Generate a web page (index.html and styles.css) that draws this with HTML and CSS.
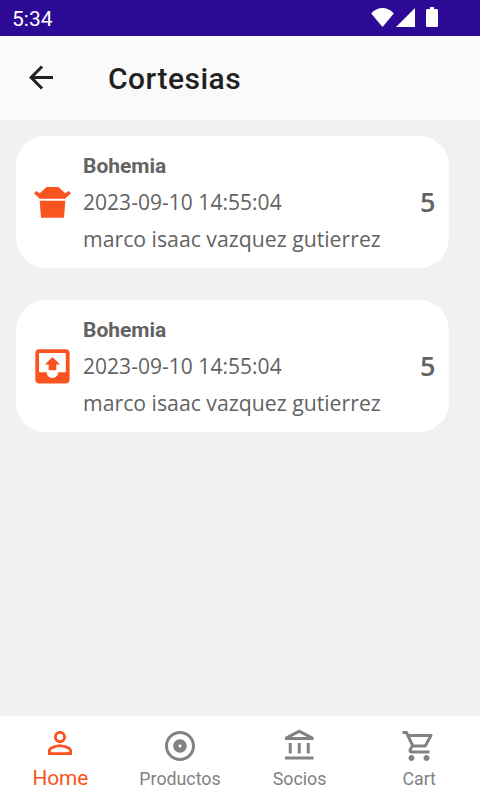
FILE: index.html
```
<!DOCTYPE html>
<html lang="es">
<head>
<meta charset="utf-8">
<title>Cortesias</title>
<link rel="stylesheet" href="styles.css">
</head>
<body>
<div class="status">
  <span class="time">5:34</span>
  <svg class="signals" width="72" height="24" viewBox="0 0 72 24" fill="#fff"><path d="M12.500 21L1.200 7.500Q6 2 12.500 2T23.800 7.500Z"/><path d="M26 21H45V2Z"/><path d="M57.500 3H60V1H64V3H66.500Q68 3 68 4.500V19.500Q68 21 66.500 21H57.500Q56 21 56 19.500V4.500Q56 3 57.500 3Z"/></svg>
</div>
<header class="bar">
  <svg class="back" width="36" height="36" viewBox="0 0.330 24 24" fill="#212121"><path d="M20 11H7.830l5.590-5.590L12 4l-8 8 8 8 1.410-1.410L7.830 13H20v-2z"/></svg>
  <h1>Cortesias</h1>
</header>
<main>
  <article class="card">
    <svg class="kind" viewBox="57 147 138 138"><path d="M72 190L79 183L89 190L110 171H145L166 190L176 183L183 190L165 206H89ZM89 212H166L162 263H93Z"/></svg>
    <div class="info"><strong>Bohemia</strong><span class="date">2023-09-10 14:55:04</span><span class="person">marco isaac vazquez gutierrez</span></div>
    <b class="count">5</b>
  </article>
  <article class="card">
    <svg class="kind" viewBox="-0.305 -0.305 24.130 24.130"><path d="M19 3H4.990c-1.110 0-1.980.9-1.980 2L3 19c0 1.100.88 2 1.990 2H19c1.100 0 2-.9 2-2V5c0-1.100-.9-2-2-2zm0 12h-4c0 1.660-1.350 3-3 3s-3-1.340-3-3H4.990V5H19v10zM8 11h2v3h4v-3h2l-4-4-4 4z"/></svg>
    <div class="info"><strong>Bohemia</strong><span class="date">2023-09-10 14:55:04</span><span class="person">marco isaac vazquez gutierrez</span></div>
    <b class="count">5</b>
  </article>
</main>
<nav>
  <a class="tab active"><svg viewBox="0 0 24 24"><path d="M12 5.900a2.100 2.100 0 110 4.200 2.100 2.100 0 010-4.200m0 9c2.970 0 6.100 1.460 6.100 2.100v1.100H5.900V17c0-.64 3.130-2.100 6.100-2.100M12 4C9.790 4 8 5.790 8 8s1.790 4 4 4 4-1.790 4-4-1.790-4-4-4zm0 9c-2.670 0-8 1.340-8 4v3h16v-3c0-2.660-5.330-4-8-4z"/></svg><span>Home</span></a>
  <a class="tab"><svg viewBox="0 0 24 24"><path d="M12 2C6.480 2 2 6.480 2 12s4.480 10 10 10 10-4.480 10-10S17.520 2 12 2zm0 18c-4.410 0-8-3.590-8-8s3.590-8 8-8 8 3.590 8 8-3.590 8-8 8zm0-12.500c-2.490 0-4.500 2.010-4.500 4.500s2.010 4.500 4.500 4.500 4.500-2.010 4.500-4.500-2.010-4.500-4.500-4.500zm0 5.500c-.55 0-1-.45-1-1s.45-1 1-1 1 .45 1 1-.45 1-1 1z"/></svg><span>Productos</span></a>
  <a class="tab"><svg viewBox="0 0 24 24"><path d="M6.500 10h-2v7h2v-7zm6 0h-2v7h2v-7zm8.500 9H2v2h19v-2zm-2.500-9h-2v7h2v-7zm-7-6.740L16.710 6H6.290l5.210-2.740m0-2.260L2 6v2h19V6l-9.500-5z"/></svg><span>Socios</span></a>
  <a class="tab"><svg viewBox="0 0 24 24"><path d="M15.550 13c.75 0 1.410-.41 1.750-1.030l3.580-6.490A.996.996 0 0020.010 4H5.210l-.94-2H1v2h2l3.600 7.590-1.350 2.440C4.520 15.370 5.480 17 7 17h12v-2H7l1.100-2h7.450zM6.160 6h12.150l-2.760 5H8.530L6.160 6zM7 18c-1.100 0-1.990.9-1.990 2S5.900 22 7 22s2-.9 2-2-.9-2-2-2zm10 0c-1.100 0-1.990.9-1.990 2s.89 2 1.990 2 2-.9 2-2-.9-2-2-2z"/></svg><span>Cart</span></a>
</nav>
</body>
</html>
```
FILE: styles.css
```
* { box-sizing: border-box; }
body {
  margin: 0;
  height: 800px;
  display: flex;
  flex-direction: column;
  background: #f1f1f1;
  font-family: Roboto, sans-serif;
  color: #636363;
  overflow: hidden;
}
.status {
  height: 36px;
  flex: none;
  display: flex;
  justify-content: space-between;
  background: #2c0a96;
  color: #fff;
  padding: 6px 38px 0 12px;
}
.time { font-size: 21px; line-height: 26px; }
.signals { width: 72px; height: 24px; }
.bar {
  height: 84px;
  flex: none;
  display: flex;
  align-items: center;
  background: #fafafa;
  padding-left: 23px;
}
.back { margin-top: -1px; }
h1 {
  margin: 2px 0 0 49px;
  font-size: 30px;
  line-height: 36px;
  font-weight: 500;
  letter-spacing: 0.5px;
  color: #212121;
}
main {
  flex: 1;
  padding: 16px 31px 0 16px;
  display: flex;
  flex-direction: column;
  gap: 32px;
}
.card {
  height: 132px;
  background: #fff;
  border-radius: 30px;
  display: flex;
  align-items: center;
  padding: 0 13.500px 0 13px;
}
.kind {
  width: 46px;
  height: 46px;
  flex: none;
  fill: #f95420;
}
.info {
  flex: 1;
  margin-left: 8px;
  display: grid;
  grid-template-rows: 36px 37px 37px;
  line-height: 37px;
  white-space: nowrap;
}
.info strong { font-size: 21px; line-height: 38px; }
.date, .person { font-family: "Open Sans", sans-serif; font-size: 21px; }
.date { letter-spacing: 0.03px; line-height: 39px; }
.person { font-size: 21.240px; }
.count { font: 600 27px/36px "Open Sans", sans-serif; }
nav {
  height: 84px;
  flex: none;
  display: grid;
  grid-template-columns: repeat(4, 119.600px);
  padding-left: 0.600px;
  background: #fff;
}
.tab {
  display: flex;
  flex-direction: column;
  align-items: center;
  padding-top: 12px;
  color: #828282;
  font-size: 17.800px;
  line-height: 22px;
}
.tab svg { width: 36px; height: 36px; fill: currentColor; }
.tab span { margin-top: 4px; }
.active { color: #f95420; font-size: 20.800px; padding-top: 9px; }
.active span { margin-top: 6px; }
```
